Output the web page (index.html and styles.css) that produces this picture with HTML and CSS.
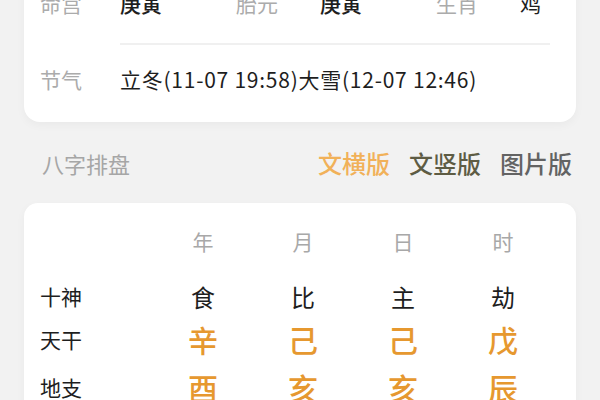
FILE: index.html
```html
<!DOCTYPE html>
<html lang="zh">
<head>
<meta charset="utf-8">
<link rel="stylesheet" href="styles.css">
</head>
<body>
<div class="page">
  <section class="card info">
    <div class="info-row first">
      <span class="lbl">命宫</span><span class="val">庚寅</span>
      <span class="lbl">胎元</span><span class="val">庚寅</span>
      <span class="lbl">生肖</span><span class="val plain">鸡</span>
    </div>
    <div class="info-row second">
      <span class="lbl">节气</span><span class="val plain jq">立冬(11-07 19:58)大雪(12-07 12:46)</span>
    </div>
  </section>

  <div class="section-head">
    <span class="title">八字排盘</span>
    <div class="tabs">
      <span class="tab active">文横版</span>
      <span class="tab olive">文竖版</span>
      <span class="tab gray">图片版</span>
    </div>
  </div>

  <section class="card chart">
    <div class="row head"><span></span><span>年</span><span>月</span><span>日</span><span>时</span></div>
    <div class="row shishen"><span class="rl">十神</span><span>食</span><span>比</span><span>主</span><span>劫</span></div>
    <div class="row tiangan"><span class="rl">天干</span><span>辛</span><span>己</span><span>己</span><span>戊</span></div>
    <div class="row dizhi"><span class="rl">地支</span><span>酉</span><span>亥</span><span>亥</span><span>辰</span></div>
  </section>
</div>
</body>
</html>
```

FILE: styles.css
```css
html, body {
  margin: 0;
  padding: 0;
  background: #f2f2f2;
  font-family: "Noto Sans CJK SC", "Noto Sans", sans-serif;
  overflow: hidden;
}
.page {
  width: 552px;
  padding: 0 24px;
}
.card {
  background: #fff;
  border-radius: 16px;
  box-shadow: 0 3px 10px rgba(0,0,0,0.04);
}
.info {
  margin-top: -37px;
  padding: 0 26px 7px 16px;
}
.info-row {
  display: grid;
  align-items: center;
  font-size: 21px;
}
.info-row.first {
  grid-template-columns: 80px 116px 84px 116px 84px auto;
  height: 80px;
}
.info-row.second {
  grid-template-columns: 80px auto;
  height: 72px;
  position: relative;
}
.info-row.second::before {
  content: "";
  position: absolute;
  left: 80px;
  right: 0;
  top: 0;
  border-top: 2px solid #f0f0f0;
}
.lbl { color: #ababab; }
.val { color: #1e1e1e; font-weight: 500; }
.val.plain { font-weight: 400; }
.jq { white-space: nowrap; letter-spacing: 0.75px; }

.section-head {
  display: flex;
  justify-content: space-between;
  align-items: center;
  height: 81px;
  padding: 0 4px 0 18px;
}
.title {
  font-size: 22px;
  color: #a6a6a6;
}
.tabs { display: flex; gap: 19px; }
.tab { font-size: 24px; font-weight: 500; }
.tab.active { color: #f1b159; }
.tab.olive { color: #5e5c44; }
.tab.gray { color: #636363; }

.chart {
  border-radius: 14px;
  padding: 18px 23px 20px 16px;
  height: 300px;
}
.row {
  display: grid;
  grid-template-columns: 113px repeat(4, 100px);
  align-items: center;
  height: 40px;
}
.row span { text-align: center; }
.row span.rl { text-align: left; font-size: 21px; font-weight: 400; color: #1e1e1e; }
.head { font-size: 21px; color: #a8a8a8; }
.shishen { margin-top: 15px; font-size: 24px; color: #1e1e1e; }
.tiangan { margin-top: 1px; font-size: 30px; color: #e6982f; font-weight: 500; }
.dizhi { margin-top: 8px; font-size: 30px; color: #e6982f; font-weight: 500; }
```
